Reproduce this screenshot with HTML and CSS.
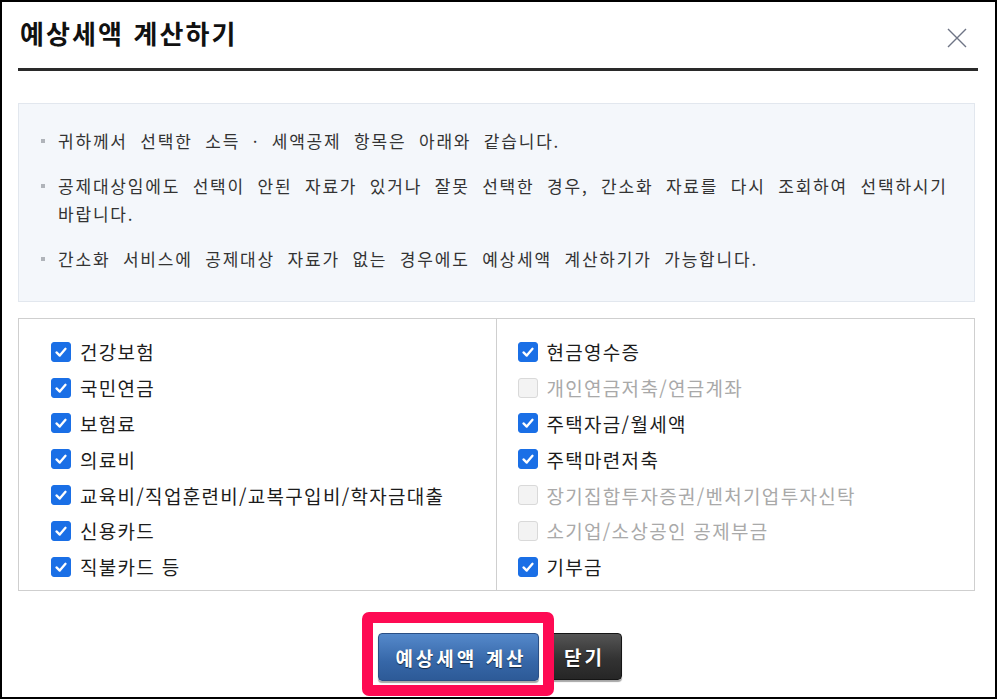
FILE: index.html
```html
<!DOCTYPE html>
<html lang="ko">
<head>
<meta charset="utf-8">
<title>예상세액 계산하기</title>
<link rel="stylesheet" href="styles.css">
</head>
<body>
<div class="dialog">
  <header class="head">
    <h1 class="title">예상세액 계산하기</h1>
    <button class="close" type="button" aria-label="닫기">
      <svg width="20" height="20" viewBox="0 0 20 20"><path d="M1 1 L19 19 M19 1 L1 19" stroke="#6e7485" stroke-width="1.4" fill="none"/></svg>
    </button>
  </header>

  <div class="notice">
    <ul class="notice-list">
      <li>귀하께서 선택한 소득 · 세액공제 항목은 아래와 같습니다.</li>
      <li>공제대상임에도 선택이 안된 자료가 있거나 잘못 선택한 경우, 간소화 자료를 다시 조회하여 선택하시기 바랍니다.</li>
      <li>간소화 서비스에 공제대상 자료가 없는 경우에도 예상세액 계산하기가 가능합니다.</li>
    </ul>
  </div>

  <div class="items">
    <ul class="col col-left">
      <li class="item"><span class="cb on"><svg viewBox="0 0 20 20"><path d="M5 10.5 L8.6 14 L15 6.5" stroke="#fff" stroke-width="2.6" fill="none" stroke-linecap="round" stroke-linejoin="round"/></svg></span>건강보험</li>
      <li class="item"><span class="cb on"><svg viewBox="0 0 20 20"><path d="M5 10.5 L8.6 14 L15 6.5" stroke="#fff" stroke-width="2.6" fill="none" stroke-linecap="round" stroke-linejoin="round"/></svg></span>국민연금</li>
      <li class="item"><span class="cb on"><svg viewBox="0 0 20 20"><path d="M5 10.5 L8.6 14 L15 6.5" stroke="#fff" stroke-width="2.6" fill="none" stroke-linecap="round" stroke-linejoin="round"/></svg></span>보험료</li>
      <li class="item"><span class="cb on"><svg viewBox="0 0 20 20"><path d="M5 10.5 L8.6 14 L15 6.5" stroke="#fff" stroke-width="2.6" fill="none" stroke-linecap="round" stroke-linejoin="round"/></svg></span>의료비</li>
      <li class="item"><span class="cb on"><svg viewBox="0 0 20 20"><path d="M5 10.5 L8.6 14 L15 6.5" stroke="#fff" stroke-width="2.6" fill="none" stroke-linecap="round" stroke-linejoin="round"/></svg></span>교육비/직업훈련비/교복구입비/학자금대출</li>
      <li class="item"><span class="cb on"><svg viewBox="0 0 20 20"><path d="M5 10.5 L8.6 14 L15 6.5" stroke="#fff" stroke-width="2.6" fill="none" stroke-linecap="round" stroke-linejoin="round"/></svg></span>신용카드</li>
      <li class="item"><span class="cb on"><svg viewBox="0 0 20 20"><path d="M5 10.5 L8.6 14 L15 6.5" stroke="#fff" stroke-width="2.6" fill="none" stroke-linecap="round" stroke-linejoin="round"/></svg></span>직불카드 등</li>
    </ul>
    <ul class="col col-right">
      <li class="item"><span class="cb on"><svg viewBox="0 0 20 20"><path d="M5 10.5 L8.6 14 L15 6.5" stroke="#fff" stroke-width="2.6" fill="none" stroke-linecap="round" stroke-linejoin="round"/></svg></span>현금영수증</li>
      <li class="item off"><span class="cb"></span>개인연금저축/연금계좌</li>
      <li class="item"><span class="cb on"><svg viewBox="0 0 20 20"><path d="M5 10.5 L8.6 14 L15 6.5" stroke="#fff" stroke-width="2.6" fill="none" stroke-linecap="round" stroke-linejoin="round"/></svg></span>주택자금/월세액</li>
      <li class="item"><span class="cb on"><svg viewBox="0 0 20 20"><path d="M5 10.5 L8.6 14 L15 6.5" stroke="#fff" stroke-width="2.6" fill="none" stroke-linecap="round" stroke-linejoin="round"/></svg></span>주택마련저축</li>
      <li class="item off"><span class="cb"></span>장기집합투자증권/벤처기업투자신탁</li>
      <li class="item off"><span class="cb"></span>소기업/소상공인 공제부금</li>
      <li class="item"><span class="cb on"><svg viewBox="0 0 20 20"><path d="M5 10.5 L8.6 14 L15 6.5" stroke="#fff" stroke-width="2.6" fill="none" stroke-linecap="round" stroke-linejoin="round"/></svg></span>기부금</li>
    </ul>
  </div>

  <div class="actions">
    <span class="primary-wrap">
      <button class="btn btn-primary" type="button">예상세액 계산</button>
      <span class="highlight"></span>
    </span>
    <button class="btn btn-dark" type="button">닫기</button>
  </div>
</div>
</body>
</html>
```

FILE: styles.css
```css
* { box-sizing: border-box; }

html, body {
  margin: 0;
  padding: 0;
  background: #fff;
}

body {
  font-family: "Noto Sans CJK KR", "Noto Sans", sans-serif;
  color: #222;
}

.dialog {
  width: 997px;
  height: 699px;
  border: 2px solid #000;
  padding: 0 20px 0 16px;
  display: flex;
  flex-direction: column;
}

.head {
  display: flex;
  justify-content: space-between;
  align-items: flex-start;
  height: 69px;
  margin-right: -3px;
  border-bottom: 3px solid #2a2a2a;
}

.title {
  margin: 0;
  padding: 14px 0 0 2px;
  font-size: 26px;
  line-height: 34px;
  font-weight: 700;
  letter-spacing: 2.1px;
  color: #111;
}

.close {
  margin: 26px 11px 0 0;
  padding: 0;
  width: 20px;
  height: 20px;
  border: 0;
  background: none;
  display: block;
}

.close svg { display: block; }

.notice {
  margin-top: 32px;
  height: 199px;
  background: #f4f7fb;
  border: 1px solid #e2e7ee;
  padding: 23px 18px 0 22px;
}

.notice-list {
  list-style: none;
  margin: 0;
  padding: 0;
}

.notice-list li {
  position: relative;
  padding-left: 17px;
  margin-bottom: 17px;
  font-size: 17px;
  line-height: 28px;
  color: #333;
  letter-spacing: 1.8px;
  word-spacing: 6px;
}

.notice-list li::before {
  content: "";
  position: absolute;
  left: 0;
  top: 12px;
  width: 4px;
  height: 4px;
  background: #b0b4ba;
}

.items {
  margin-top: 16px;
  height: 273px;
  border: 1px solid #cfcfcf;
  display: grid;
  grid-template-columns: 1fr 1fr;
}

.col {
  list-style: none;
  margin: 0;
  padding: 15px 0 5px 0;
}

.col-left {
  padding-left: 32px;
  border-right: 1px solid #cfcfcf;
}

.col-right {
  padding-left: 21px;
}

.item {
  display: flex;
  align-items: center;
  height: 35.8px;
  font-size: 19px;
  letter-spacing: 1.3px;
  color: #1c1c1c;
}

.item.off { color: #a9a9a9; }

.cb {
  flex: none;
  width: 20px;
  height: 20px;
  margin-right: 9px;
  border-radius: 3px;
  background: #f3f3f3;
  border: 1px solid #d9d9d9;
}

.cb.on {
  background: #1a6fe6;
  border-color: #1a6fe6;
}

.cb svg {
  display: block;
  width: 18px;
  height: 18px;
}

.actions {
  margin-top: 42px;
  display: flex;
  justify-content: center;
  gap: 6px;
  padding-left: 6px;
}

.primary-wrap {
  position: relative;
  display: block;
}

.btn {
  display: block;
  height: 48px;
  border-radius: 4px;
  color: #fff;
  font-family: "Noto Sans CJK KR", sans-serif;
  font-weight: 700;
  font-size: 19px;
  text-shadow: 0 1px 1px rgba(0, 0, 0, 0.6);
  padding: 0;
  cursor: pointer;
}

.btn-primary {
  width: 161px;
  letter-spacing: 3px;
  padding-left: 6px;
  background: linear-gradient(#5589cb, #3667a8 60%, #2d5a97);
  border: 1px solid #2a4f85;
  box-shadow: 0 2px 1px rgba(0, 0, 0, 0.35);
}

.btn-dark {
  width: 77px;
  height: 47px;
  letter-spacing: 3px;
  padding-left: 3px;
  background: linear-gradient(#555, #333 55%, #262626);
  border: 1px solid #151515;
  box-shadow: 0 2px 1px rgba(0, 0, 0, 0.35);
}

.highlight {
  position: absolute;
  z-index: 2;
  left: -16px;
  right: -15px;
  top: -21px;
  bottom: -15px;
  border: 11px solid #fe0a53;
  border-radius: 7px;
  pointer-events: none;
}
```
